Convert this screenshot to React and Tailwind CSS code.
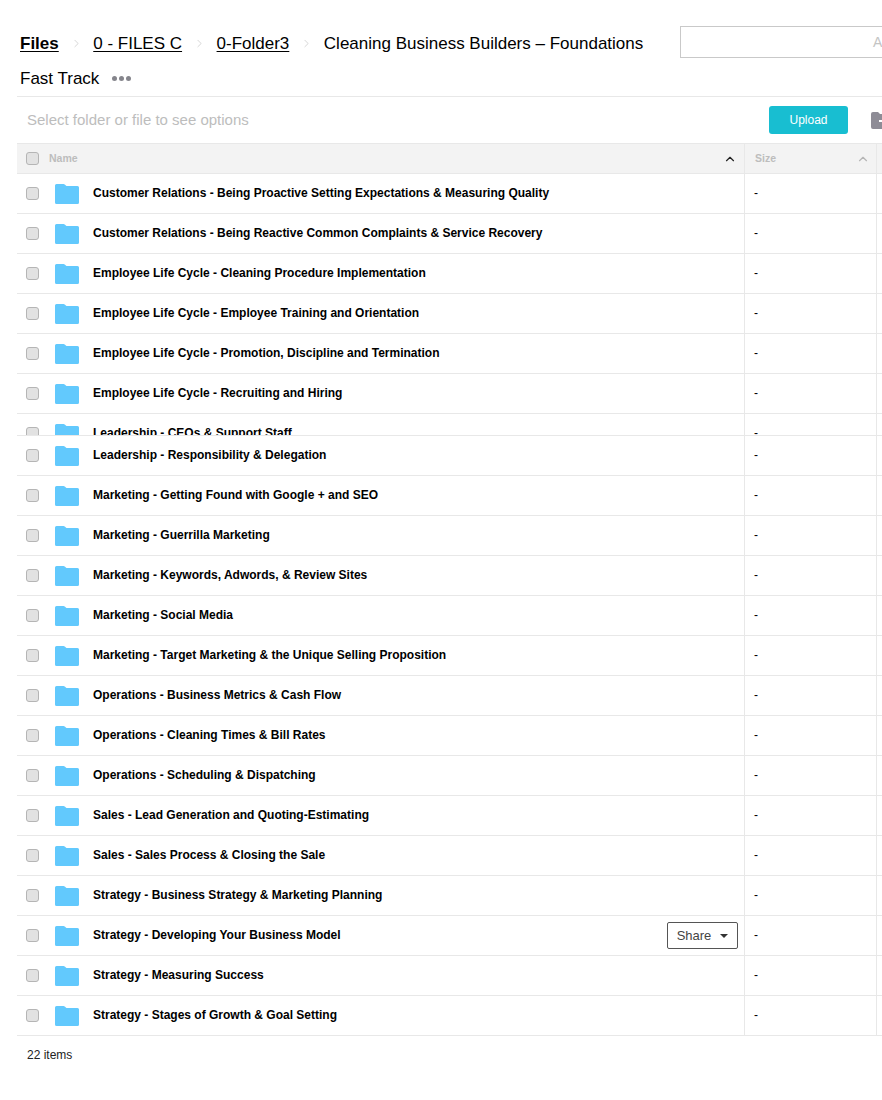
import React from 'react';
import { ChevronRight, ChevronUp } from 'lucide-react';

const topRows = [
  'Customer Relations - Being Proactive Setting Expectations & Measuring Quality',
  'Customer Relations - Being Reactive Common Complaints & Service Recovery',
  'Employee Life Cycle - Cleaning Procedure Implementation',
  'Employee Life Cycle - Employee Training and Orientation',
  'Employee Life Cycle - Promotion, Discipline and Termination',
  'Employee Life Cycle - Recruiting and Hiring',
  'Leadership - CEOs & Support Staff',
];

const bottomRows = [
  'Leadership - Responsibility & Delegation',
  'Marketing - Getting Found with Google + and SEO',
  'Marketing - Guerrilla Marketing',
  'Marketing - Keywords, Adwords, & Review Sites',
  'Marketing - Social Media',
  'Marketing - Target Marketing & the Unique Selling Proposition',
  'Operations - Business Metrics & Cash Flow',
  'Operations - Cleaning Times & Bill Rates',
  'Operations - Scheduling & Dispatching',
  'Sales - Lead Generation and Quoting-Estimating',
  'Sales - Sales Process & Closing the Sale',
  'Strategy - Business Strategy & Marketing Planning',
  'Strategy - Developing Your Business Model',
  'Strategy - Measuring Success',
  'Strategy - Stages of Growth & Goal Setting',
];

const Checkbox = () => (
  <span className="block w-[11px] h-[11px] box-content border border-[#b5b5b5] rounded-[3px] bg-[#e2e2e2] shrink-0" />
);

const FolderIcon = () => (
  <svg width="24" height="20" viewBox="0 0 24 20" className="block shrink-0">
    <path
      d="M0 1.5A1.5 1.5 0 0 1 1.5 0h7a2 2 0 0 1 1.5.7L11.5 2H22.5A1.5 1.5 0 0 1 24 3.5v15a1.5 1.5 0 0 1-1.5 1.5h-21A1.5 1.5 0 0 1 0 18.500z"
      fill="#62c9fd"
    />
  </svg>
);

const Separator = () => (
  <ChevronRight size={13} strokeWidth={1} className="mx-[10.75px] text-[#b5b5b5] inline-block align-[-1px]" />
);

const Crumb = ({ children }) => (
  <>
    <a className="underline underline-offset-2 text-black">{children}</a>
    <Separator />
  </>
);

const Row = ({ name, share }) => (
  <div className="flex h-10 border-b border-[#e8e8e8]">
    <div className="w-[728px] flex items-center pl-[9px] pr-[6px] border-r border-[#e8e8e8] shrink-0">
      <Checkbox />
      <div className="ml-[16px]">
        <FolderIcon />
      </div>
      <div className="ml-[14px] pb-[2px] text-xs font-bold text-black flex-1">{name}</div>
      {share && (
        <button className="w-[71px] h-[27px] border border-[#555] rounded-[2px] text-[13px] text-[#444] flex items-center justify-center gap-[9px]">
          Share
          <span className="w-0 h-0 border-x-[4px] border-x-transparent border-t-[4px] border-t-[#333]" />
        </button>
      )}
    </div>
    <div className="w-[132px] pl-[9px] pb-[2px] flex items-center border-r border-[#e8e8e8] text-xs text-black shrink-0">-</div>
  </div>
);

export default function App() {
  return (
    <div className="w-[882px] h-[1100px] overflow-hidden bg-white font-['Liberation_Sans',Arial,sans-serif] text-black">
      <div className="pl-[17px] w-[940px]">
        {/* breadcrumb + search */}
        <div className="h-[97px] border-b border-[#e8e8e8] flex">
          <div className="w-[663px] pl-[3px] pt-[26px] text-[17px] leading-[35px] shrink-0">
            <div className="whitespace-nowrap">
              <a className="font-bold underline underline-offset-2">Files</a>
              <Separator />
              <Crumb>0 - FILES C</Crumb>
              <Crumb>0-Folder3</Crumb>
              Cleaning Business Builders – Foundations
            </div>
            <div className="flex items-center">
              Fast Track
              <span className="ml-[13px] flex gap-[2px]">
                <span className="w-[5px] h-[5px] rounded-full bg-[#85858c]" />
                <span className="w-[5px] h-[5px] rounded-full bg-[#85858c]" />
                <span className="w-[5px] h-[5px] rounded-full bg-[#85858c]" />
              </span>
            </div>
          </div>
          <div className="mt-[26px] h-8 w-[240px] border border-[#c9c9c9] text-sm text-[#c4c4c4] pl-[192px] leading-[30px]">
            All
          </div>
        </div>

        {/* toolbar */}
        <div className="h-[46px] flex items-center pl-[10px]">
          <span className="text-[15px] text-[#bdbdbd] w-[742px]">Select folder or file to see options</span>
          <button className="w-[79px] h-7 rounded-[3px] bg-[#18bed1] text-white text-xs">Upload</button>
          <svg width="22" height="17" viewBox="0 0 22 17" className="ml-[23px]">
            <path d="M0 2a2 2 0 0 1 2-2h5l2 2h11a2 2 0 0 1 2 2v11a2 2 0 0 1-2 2H2a2 2 0 0 1-2-2z" fill="#8e8c96" />
            <path d="M8 9h6" stroke="#fff" strokeWidth="2" />
          </svg>
        </div>

        {/* table head */}
        <div className="flex h-[31px] bg-[#f3f3f3] border-y border-[#e8e8e8] text-[10.5px] font-bold text-[#bdbdbd]">
          <div className="w-[728px] flex items-center pl-[9px] pr-[7px] border-r border-[#e8e8e8] shrink-0">
            <Checkbox />
            <span className="ml-[10px] flex-1">Name</span>
            <ChevronUp size={14} strokeWidth={2} className="text-[#222]" />
          </div>
          <div className="w-[132px] flex items-center pl-[10px] pr-[6px] border-r border-[#e8e8e8] shrink-0">
            <span className="flex-1">Size</span>
            <ChevronUp size={14} strokeWidth={2} className="text-[#b5b5b5]" />
          </div>
          <div className="flex-1" />
        </div>

        {/* list is cut off here, second copy sits on top of it */}
        <div className="h-[261px] overflow-hidden">
          {topRows.map((name) => (
            <Row key={name} name={name} />
          ))}
        </div>
        <div className="border-t border-[#e8e8e8]">
          {bottomRows.map((name) => (
            <Row key={name} name={name} share={name === 'Strategy - Developing Your Business Model'} />
          ))}
        </div>

        <div className="pl-[10px] pt-[11px] text-xs text-[#222]">22 items</div>
      </div>
    </div>
  );
}
